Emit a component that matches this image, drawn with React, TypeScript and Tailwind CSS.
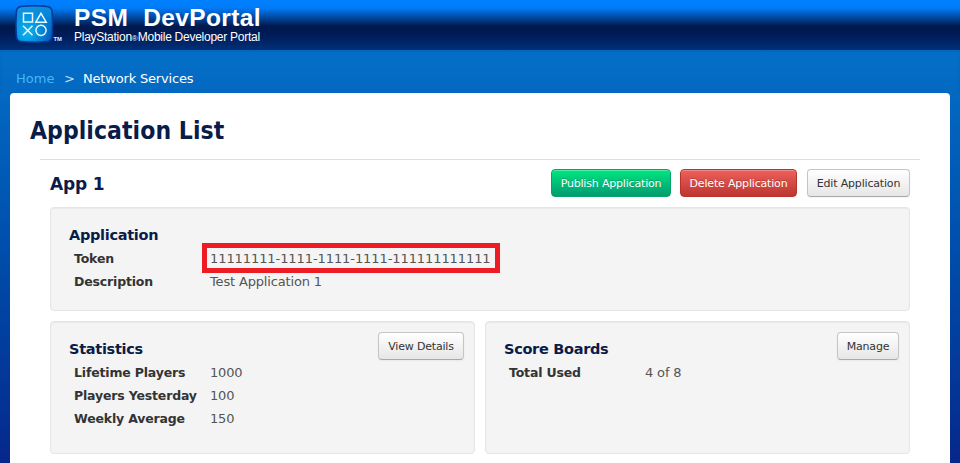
import type { ReactNode } from "react";

function Logo() {
  return (
    <svg className="block h-[42px] w-[50px] shrink-0" viewBox="0 0 50 42">
      <defs>
        <linearGradient id="tile" x1="0" y1="0" x2="0.3" y2="1">
          <stop offset="0" stopColor="#1b97e0" />
          <stop offset="0.5" stopColor="#0284d8" />
          <stop offset="1" stopColor="#0560bd" />
        </linearGradient>
        <radialGradient id="glow" cx="0.3" cy="0.75" r="0.65">
          <stop offset="0" stopColor="#08b5f0" />
          <stop offset="1" stopColor="#08b5f0" stopOpacity="0" />
        </radialGradient>
      </defs>
      <path d="M6 1.5Q19 0 32 1.5Q36.500 2 37 6Q38.200 19 37 32Q36.500 36 32 36.5Q19 38 6 36.5Q2 36 1.5 32Q0.3 19 1.5 6Q2 2 6 1.5Z" fill="url(#tile)" />
      <path d="M6 1.5Q19 0 32 1.5Q36.500 2 37 6Q38.200 19 37 32Q36.500 36 32 36.5Q19 38 6 36.5Q2 36 1.5 32Q0.3 19 1.5 6Q2 2 6 1.5Z" fill="url(#glow)" stroke="#053aa0" strokeWidth="1.6" />
      <g fill="none" stroke="#eaf8ff" strokeWidth="1.5">
        <path d="M8.500 8.300h9v8.700h-9zM26 8.300l5.200 8.900H20.800zM8 20.800l9.500 9.500M17.500 20.800l-9.500 9.500" />
        <circle cx="26" cy="25.300" r="5.100" />
      </g>
      <text x="38.500" y="36" fontSize="5.800" fontWeight="bold" fill="#e5efff" className="font-['Liberation_Sans',sans-serif]">TM</text>
    </svg>
  );
}

const tones = {
  green: "border-[#02a467] bg-linear-to-b from-[#00e680] to-[#039c70] text-white shadow-[inset_0_1px_0_#4deba6] [text-shadow:0_-1px_0_#0003]",
  red: "border-[#b9322e] bg-linear-to-b from-[#ee5f5b] to-[#bd362f] text-white shadow-[inset_0_1px_0_#f38b88] [text-shadow:0_-1px_0_#0003]",
  plain: "border-[#c5c5c5] border-b-[#a9a9a9] bg-linear-to-b from-white to-[#e6e6e6] text-[#333] shadow-[0_1px_2px_#0000000d]",
};

function Button({ tone = "plain", className, children }: { tone?: keyof typeof tones; className: string; children: ReactNode }) {
  return (
    <button className={`flex h-[28px] shrink-0 items-center justify-center rounded-[4px] border text-[11px] leading-none tracking-[-0.18px] whitespace-nowrap ${tones[tone]} ${className}`}>
      {children}
    </button>
  );
}

function Panel({ title, rows, action, className }: { title: string; rows: ReactNode[][]; action?: ReactNode; className: string }) {
  return (
    <section className={`flex justify-between rounded-[4px] border border-[#e5e5e5] bg-[#f4f4f4] pt-[10px] pr-[10px] pl-[18px] shadow-[inset_0_1px_1px_#0000000d] ${className}`}>
      <div className="pt-[7px]">
        <h3 className="h-[22px] text-[14.5px] leading-[21px] font-bold tracking-[-0.3px] text-[#0a1c4a]">{title}</h3>
        {rows.map((row, i) => (
          <div key={i} className="flex h-[23px] items-center pl-[5px] text-[13px] leading-[23px] whitespace-nowrap">
            <div className="w-[136px] text-[12.5px] font-bold tracking-[-0.17px] text-[#333]">{row[0]}</div>
            <div className="tracking-[-0.16px] text-[#555]">{row[1]}</div>
          </div>
        ))}
      </div>
      {action}
    </section>
  );
}

export default function App() {
  return (
    <div className="flex h-[463px] w-[960px] flex-col overflow-hidden bg-linear-to-b from-[#0570c8] from-[50px] to-[#06278c] font-['DejaVu_Sans',sans-serif]">
      <header className="flex h-[50px] shrink-0 bg-[linear-gradient(#0080ff_0px,#007cf8_8px,#001a50_26px,#001b55_34px,#003078_50px)] pt-[5px] pl-[15px] font-['Liberation_Sans',sans-serif] text-white">
        <Logo />
        <div className="pl-[9px] whitespace-nowrap">
          <div className="h-[26px] text-[24.5px] leading-[25px] font-bold tracking-[0.35px] [word-spacing:8px]">PSM DevPortal</div>
          <div className="text-[12px] leading-[13px] tracking-[-0.26px]">PlayStation<span className="text-[8px] tracking-normal">®</span>Mobile Developer Portal</div>
        </div>
      </header>
      <nav className="flex h-[43px] shrink-0 items-center pt-[14px] pl-[16px] text-[13px] tracking-[-0.18px] text-white shadow-[inset_0_2px_3px_#00409033]">
        <span className="w-[48px] tracking-normal text-[#40b8f8]">Home</span>
        <span className="w-[19px] text-[#c5e0f6]">&gt;</span>
        <span>Network Services</span>
      </nav>
      <main className="mx-[10px] h-[370px] shrink-0 rounded-t-[4px] bg-white">
        <h1 className="h-[66px] pt-[22px] pl-[20px] font-['DejaVu_Sans_Condensed','DejaVu_Sans',sans-serif] text-[24.5px] leading-[31px] font-bold tracking-[0.05px] whitespace-nowrap text-[#0a1c4a]">Application List</h1>
        <div className="mx-[30px] border-t border-[#ddd] px-[10px] pt-[9px]">
          <div className="flex h-[38px] items-start">
            <h2 className="mr-auto text-[17px] leading-[30px] font-bold tracking-[-0.15px] text-[#0a1c4a]">App 1</h2>
            <Button tone="green" className="mr-[9px] w-[120px]">Publish Application</Button>
            <Button tone="red" className="mr-[10px] w-[117px]">Delete Application</Button>
            <Button className="w-[103px]">Edit Application</Button>
          </div>
          <Panel
            title="Application"
            className="h-[104px]"
            rows={[
              ["Token", <span className="-mt-[2px] -ml-[8px] flex h-[30px] w-[298px] items-center border-[5px] border-[#ed1c24] pt-[2px] pl-[3px] tracking-[-0.08px]">11111111-1111-1111-1111-111111111111</span>],
              ["Description", "Test Application 1"],
            ]}
          />
          <div className="mt-[10px] flex gap-[10px]">
            <Panel
              title="Statistics"
              className="h-[133px] w-[425px]"
              rows={[["Lifetime Players", "1000"], ["Players Yesterday", "100"], ["Weekly Average", "150"]]}
              action={<Button className="w-[86px]">View Details</Button>}
            />
            <Panel title="Score Boards" className="h-[133px] w-[425px]" rows={[["Total Used", "4 of 8"]]} action={<Button className="w-[62px]">Manage</Button>} />
          </div>
        </div>
      </main>
    </div>
  );
}
